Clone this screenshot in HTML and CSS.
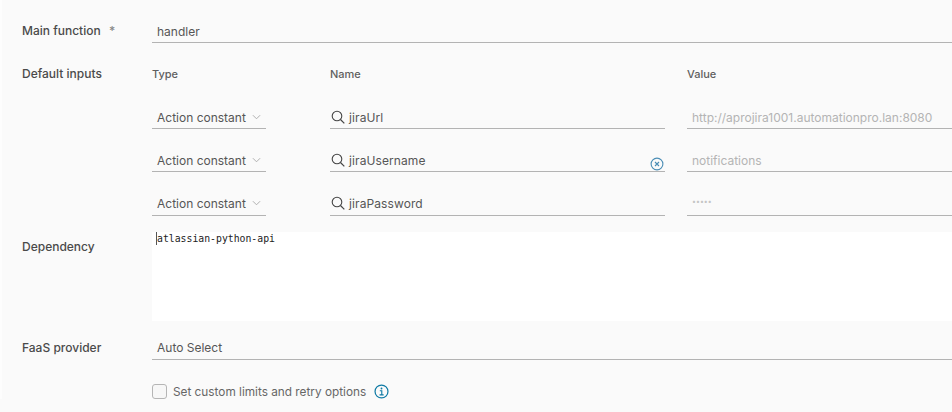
FILE: index.html
```html
<!DOCTYPE html>
<html lang="en">
<head>
  <meta charset="UTF-8">
  <title>Action editor</title>
  <link rel="stylesheet" href="styles.css">
</head>
<body>

  <div class="form">
    <div class="row row-main">
      <label class="label">Main function <span class="required">*</span></label>
      <div class="field">handler</div>
    </div>

    <div class="row row-inputs">
      <label class="label">Default inputs</label>
      <div class="inputs">
        <div class="head">Type</div>
        <div class="head">Name</div>
        <div class="head">Value</div>

        <div class="field select">Action constant
          <svg class="chevron" viewBox="0 0 10 6" width="9" height="6"><path d="M1 1l4 4 4-4" fill="none" stroke="#a8a8a8" stroke-width="1"/></svg>
        </div>
        <div class="field search">
          <svg class="lens" viewBox="0 0 14 14" width="14" height="14"><circle cx="6" cy="6" r="4.8" fill="none" stroke="#444" stroke-width="1.1"/><path d="M9.5 9.5l3.8 3.8" stroke="#444" stroke-width="1.2"/></svg>
          jiraUrl
        </div>
        <div class="field placeholder">http://aprojira1001.automationpro.lan:8080</div>

        <div class="field select">Action constant
          <svg class="chevron" viewBox="0 0 10 6" width="9" height="6"><path d="M1 1l4 4 4-4" fill="none" stroke="#a8a8a8" stroke-width="1"/></svg>
        </div>
        <div class="field search">
          <svg class="lens" viewBox="0 0 14 14" width="14" height="14"><circle cx="6" cy="6" r="4.8" fill="none" stroke="#444" stroke-width="1.1"/><path d="M9.5 9.5l3.8 3.8" stroke="#444" stroke-width="1.2"/></svg>
          jiraUsername
          <svg class="clear" viewBox="0 0 14 14" width="14" height="14"><circle cx="7" cy="7" r="5.9" fill="none" stroke="#4a8db5" stroke-width="1.1"/><path d="M5 5l4 4M9 5l-4 4" stroke="#4a8db5" stroke-width="1.1"/></svg>
        </div>
        <div class="field placeholder">notifications</div>

        <div class="field select last">Action constant
          <svg class="chevron" viewBox="0 0 10 6" width="9" height="6"><path d="M1 1l4 4 4-4" fill="none" stroke="#a8a8a8" stroke-width="1"/></svg>
        </div>
        <div class="field search last">
          <svg class="lens" viewBox="0 0 14 14" width="14" height="14"><circle cx="6" cy="6" r="4.8" fill="none" stroke="#444" stroke-width="1.1"/><path d="M9.5 9.5l3.8 3.8" stroke="#444" stroke-width="1.2"/></svg>
          jiraPassword
        </div>
        <div class="field placeholder dots">•••••</div>
      </div>
    </div>

    <div class="row row-dep">
      <label class="label">Dependency</label>
      <div class="code"><span class="cursor"></span>atlassian-python-api</div>
    </div>

    <div class="row row-faas">
      <label class="label">FaaS provider</label>
      <div class="field">Auto Select</div>
    </div>

    <div class="row row-check">
      <span></span>
      <div class="check">
        <span class="box"></span>
        Set custom limits and retry options
        <svg class="info" viewBox="0 0 16 16" width="15" height="15"><circle cx="8" cy="8" r="6.9" fill="none" stroke="#0e7aa5" stroke-width="1.3"/><circle cx="8" cy="4.8" r="1" fill="#0e7aa5"/><path d="M6.2 7.2h2.1v4.3M5.9 11.6h4.4" fill="none" stroke="#0e7aa5" stroke-width="1.2"/></svg>
      </div>
    </div>
  </div>

</body>
</html>
```

FILE: styles.css
```css
body {
  margin: 0;
  height: 412px;
  overflow: hidden;
  background-color: #fafafa;
  font-family: "Inter", "Noto Sans", sans-serif;
  font-size: 12px;
  color: #565656;
}

.form {
  border-left: 2px solid #fdfdfd;
  padding-left: 20px;
}

.row {
  display: grid;
  grid-template-columns: 130px 1fr;
}

.label {
  font-weight: 500;
  color: #4a4a4a;
  font-size: 12px;
}

.required {
  margin-left: 5px;
  color: #888;
}

.field {
  display: flex;
  align-items: center;
  height: 22px;
  padding-left: 5px;
  border-bottom: 1px solid #b3b3b3;
  box-sizing: content-box;
}

.row-main {
  padding-top: 20px;
}

.row-main .label {
  padding-top: 3px;
}

.row-inputs {
  padding-top: 21px;
}

.row-inputs .label {
  padding-top: 2px;
}

.inputs {
  display: grid;
  grid-template-columns: 114px 377px 1fr;
  grid-template-rows: auto 23px 23px 24px;
  align-items: end;
  column-gap: 22px;
  row-gap: 20px;
}

.inputs > :nth-child(3n+2) {
  margin-left: 42px;
}

.head {
  align-self: start;
  font-size: 11px;
  font-weight: 500;
  color: #5f5f5f;
  height: 18px;
  line-height: 20px;
  margin-bottom: 4px;
}

.select {
  justify-content: space-between;
}

.last {
  padding-bottom: 1px;
}

.chevron {
  margin-right: 5px;
}

.search {
  position: relative;
  padding-left: 1px;
  gap: 4px;
  letter-spacing: 0.1px;
}

.clear {
  position: absolute;
  right: 1px;
  bottom: 0;
}

.placeholder {
  color: #b4b4b4;
}

.dots {
  font-size: 7px;
  height: 18px;
  align-items: flex-start;
  color: #c4c4c4;
}

.row-dep {
  padding-top: 16px;
}

.row-dep .label {
  padding-top: 7px;
}

.code {
  height: 89px;
  background-color: white;
  font-family: "DejaVu Sans Mono", monospace;
  font-size: 9.8px;
  line-height: 13px;
  color: #222;
  padding-left: 4px;
}

.cursor {
  display: inline-block;
  width: 1px;
  height: 13px;
  background-color: #555;
  vertical-align: top;
}

.row-faas {
  padding-top: 15px;
}

.row-faas .label {
  padding-top: 4px;
}

.row-faas .field {
  height: 23px;
}

.row-check {
  padding-top: 24px;
}

.check {
  display: flex;
  align-items: center;
  font-size: 11.8px;
  color: #666;
}

.box {
  width: 13px;
  height: 13px;
  border: 1px solid #b5b5b5;
  border-radius: 3px;
  background-color: #f7f7f7;
  margin-right: 6px;
}

.info {
  margin-left: 8px;
}
```
